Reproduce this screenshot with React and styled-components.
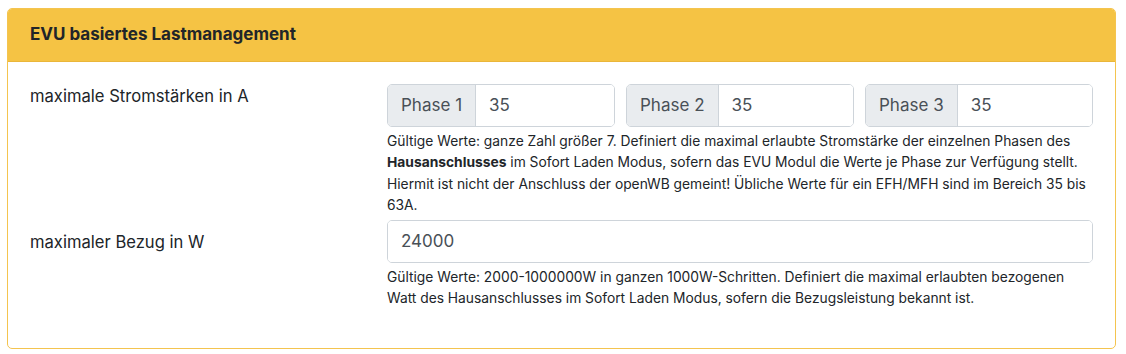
import React from "react";
import styled, { createGlobalStyle } from "styled-components";

const GlobalStyle = createGlobalStyle`
  body {
    margin: 0;
    padding: 8px 10px 0 7px;
    background: #fff;
    font-family: Inter, "Liberation Sans", sans-serif;
    color: #212529;
  }
`;

const Card = styled.section`
  border: 1px solid #f4c44f;
  border-radius: 5px;
  overflow: hidden;
  background: #fff;
`;

const CardHeader = styled.header`
  background: #f5c344;
  border-bottom: 1px solid #eab63a;
  padding: 13px 22px;
  font-size: 17px;
  font-weight: 700;
  line-height: 25.5px;
  color: #212529;
`;

const CardBody = styled.div`
  padding: 22px 22px 38px 22px;
`;

const FormRow = styled.div`
  display: grid;
  grid-template-columns: 357px 1fr;
  margin-bottom: ${(p) => (p.$last ? "0" : "3px")};
`;

const Label = styled.label`
  font-size: 16.6px;
  line-height: 25.5px;
  padding-top: ${(p) => (p.$offset ? "10px" : "0")};
`;

const PhaseGrid = styled.div`
  display: grid;
  grid-template-columns: repeat(3, 1fr);
  gap: 11px;
`;

const InputGroup = styled.div`
  display: flex;
  height: 41px;
  border: 1px solid #ced4da;
  border-radius: 5px;
  overflow: hidden;
`;

const Addon = styled.span`
  display: flex;
  align-items: center;
  padding: 0 13px;
  background: #e9ecef;
  border-right: 1px solid #ced4da;
  font-size: 17px;
  color: #495057;
  white-space: nowrap;
`;

const Input = styled.input`
  flex: 1;
  min-width: 0;
  border: 0;
  outline: none;
  padding: 0 13px;
  font-family: inherit;
  font-size: 17px;
  color: #495057;
  background: #fff;
`;

const Help = styled.small`
  display: block;
  margin-top: 4px;
  font-size: 13.8px;
  line-height: 21.6px;
  color: #212529;

  b {
    font-weight: 700;
  }
`;

export default function App() {
  return (
    <>
      <GlobalStyle />
      <Card>
        <CardHeader>EVU basiertes Lastmanagement</CardHeader>
        <CardBody>
          <FormRow>
            <Label>maximale Stromstärken in A</Label>
            <div>
              <PhaseGrid>
                {[1, 2, 3].map((n) => (
                  <InputGroup key={n}>
                    <Addon>Phase {n}</Addon>
                    <Input type="text" defaultValue="35" />
                  </InputGroup>
                ))}
              </PhaseGrid>
              <Help>
                Gültige Werte: ganze Zahl größer 7. Definiert die maximal erlaubte Stromstärke der
                einzelnen Phasen des <b>Hausanschlusses</b> im Sofort Laden Modus, sofern das EVU
                Modul die Werte je Phase zur Verfügung stellt. Hiermit ist nicht der Anschluss der
                openWB gemeint! Übliche Werte für ein EFH/MFH sind im Bereich 35 bis 63A.
              </Help>
            </div>
          </FormRow>
          <FormRow $last>
            <Label $offset>maximaler Bezug in W</Label>
            <div>
              <InputGroup>
                <Input type="text" defaultValue="24000" />
              </InputGroup>
              <Help>
                Gültige Werte: 2000-1000000W in ganzen 1000W-Schritten. Definiert die maximal
                erlaubten bezogenen Watt des Hausanschlusses im Sofort Laden Modus, sofern die
                Bezugsleistung bekannt ist.
              </Help>
            </div>
          </FormRow>
        </CardBody>
      </Card>
    </>
  );
}
